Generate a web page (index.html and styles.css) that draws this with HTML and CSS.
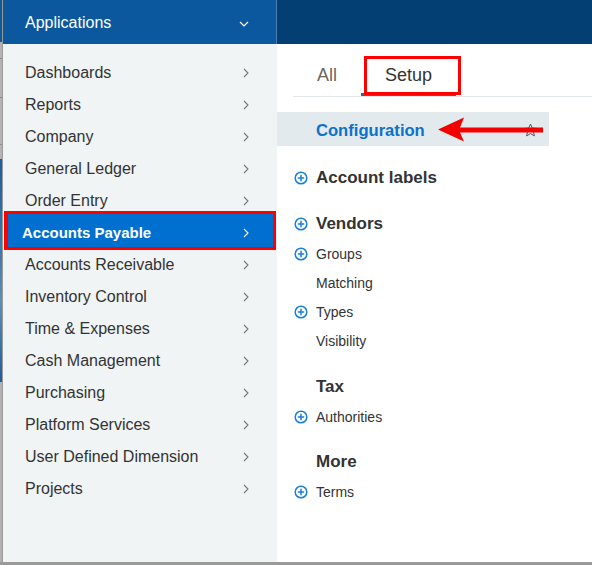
FILE: index.html
```html
<!DOCTYPE html>
<html>
<head>
<meta charset="utf-8">
<link rel="stylesheet" href="styles.css">
</head>
<body>
<div class="page">
  <div class="strip"></div>
  <aside class="apps">
    <div class="apps-head">
      <span>Applications</span>
      <svg class="chev-down" width="10" height="6" viewBox="0 0 10 6"><path d="M1 1l4 4 4-4" fill="none" stroke="#fff" stroke-width="1.2"/></svg>
    </div>
    <ul class="menu">
      <li class="item"><span>Dashboards</span><svg class="chev" width="6" height="10" viewBox="0 0 6 10"><path d="M1 1l4 4-4 4" fill="none" stroke="#777" stroke-width="1.1"/></svg></li>
      <li class="item"><span>Reports</span><svg class="chev" width="6" height="10" viewBox="0 0 6 10"><path d="M1 1l4 4-4 4" fill="none" stroke="#777" stroke-width="1.1"/></svg></li>
      <li class="item"><span>Company</span><svg class="chev" width="6" height="10" viewBox="0 0 6 10"><path d="M1 1l4 4-4 4" fill="none" stroke="#777" stroke-width="1.1"/></svg></li>
      <li class="item"><span>General Ledger</span><svg class="chev" width="6" height="10" viewBox="0 0 6 10"><path d="M1 1l4 4-4 4" fill="none" stroke="#777" stroke-width="1.1"/></svg></li>
      <li class="item"><span>Order Entry</span><svg class="chev" width="6" height="10" viewBox="0 0 6 10"><path d="M1 1l4 4-4 4" fill="none" stroke="#777" stroke-width="1.1"/></svg></li>
      <li class="item active"><span>Accounts Payable</span><svg class="chev" width="6" height="10" viewBox="0 0 6 10"><path d="M1 1l4 4-4 4" fill="none" stroke="#fff" stroke-width="1.1"/></svg></li>
      <li class="item"><span>Accounts Receivable</span><svg class="chev" width="6" height="10" viewBox="0 0 6 10"><path d="M1 1l4 4-4 4" fill="none" stroke="#777" stroke-width="1.1"/></svg></li>
      <li class="item"><span>Inventory Control</span><svg class="chev" width="6" height="10" viewBox="0 0 6 10"><path d="M1 1l4 4-4 4" fill="none" stroke="#777" stroke-width="1.1"/></svg></li>
      <li class="item"><span>Time &amp; Expenses</span><svg class="chev" width="6" height="10" viewBox="0 0 6 10"><path d="M1 1l4 4-4 4" fill="none" stroke="#777" stroke-width="1.1"/></svg></li>
      <li class="item"><span>Cash Management</span><svg class="chev" width="6" height="10" viewBox="0 0 6 10"><path d="M1 1l4 4-4 4" fill="none" stroke="#777" stroke-width="1.1"/></svg></li>
      <li class="item"><span>Purchasing</span><svg class="chev" width="6" height="10" viewBox="0 0 6 10"><path d="M1 1l4 4-4 4" fill="none" stroke="#777" stroke-width="1.1"/></svg></li>
      <li class="item"><span>Platform Services</span><svg class="chev" width="6" height="10" viewBox="0 0 6 10"><path d="M1 1l4 4-4 4" fill="none" stroke="#777" stroke-width="1.1"/></svg></li>
      <li class="item"><span>User Defined Dimension</span><svg class="chev" width="6" height="10" viewBox="0 0 6 10"><path d="M1 1l4 4-4 4" fill="none" stroke="#777" stroke-width="1.1"/></svg></li>
      <li class="item"><span>Projects</span><svg class="chev" width="6" height="10" viewBox="0 0 6 10"><path d="M1 1l4 4-4 4" fill="none" stroke="#777" stroke-width="1.1"/></svg></li>
    </ul>
  </aside>
  <main class="detail">
    <div class="detail-head"></div>
    <nav class="tabs">
      <div class="tab">All</div>
      <div class="tab current">Setup</div>
    </nav>
    <div class="config">
      <span>Configuration</span>
      <svg class="star" width="15" height="14" viewBox="0 0 15 14"><path d="M7.5 1l1.8 4.1 4.5.4-3.4 3 1 4.4-3.9-2.3-3.9 2.3 1-4.4-3.4-3 4.5-.4z" fill="none" stroke="#555" stroke-width="1"/></svg>
      <svg class="arrow" width="105" height="25" viewBox="0 0 105 25"><path d="M0 12.5L26 0.5L22 10.5H105V15.5H22L26 24.5Z" fill="#f20000"/></svg>
    </div>
    <section class="group first">
      <h3 class="row head"><svg class="plus" width="14" height="14" viewBox="0 0 14 14"><circle cx="7" cy="7" r="5.8" fill="none" stroke="#1a7fd6" stroke-width="1.5"/><path d="M7 3.8v6.4M3.8 7h6.4" stroke="#1a7fd6" stroke-width="1.5"/></svg>Account labels</h3>
    </section>
    <section class="group">
      <h3 class="row head"><svg class="plus" width="14" height="14" viewBox="0 0 14 14"><circle cx="7" cy="7" r="5.8" fill="none" stroke="#1a7fd6" stroke-width="1.5"/><path d="M7 3.8v6.4M3.8 7h6.4" stroke="#1a7fd6" stroke-width="1.5"/></svg>Vendors</h3>
      <div class="row sub"><svg class="plus" width="14" height="14" viewBox="0 0 14 14"><circle cx="7" cy="7" r="5.8" fill="none" stroke="#1a7fd6" stroke-width="1.5"/><path d="M7 3.8v6.4M3.8 7h6.4" stroke="#1a7fd6" stroke-width="1.5"/></svg>Groups</div>
      <div class="row sub">Matching</div>
      <div class="row sub"><svg class="plus" width="14" height="14" viewBox="0 0 14 14"><circle cx="7" cy="7" r="5.8" fill="none" stroke="#1a7fd6" stroke-width="1.5"/><path d="M7 3.8v6.4M3.8 7h6.4" stroke="#1a7fd6" stroke-width="1.5"/></svg>Types</div>
      <div class="row sub">Visibility</div>
    </section>
    <section class="group spaced">
      <h3 class="row head">Tax</h3>
      <div class="row sub"><svg class="plus" width="14" height="14" viewBox="0 0 14 14"><circle cx="7" cy="7" r="5.8" fill="none" stroke="#1a7fd6" stroke-width="1.5"/><path d="M7 3.8v6.4M3.8 7h6.4" stroke="#1a7fd6" stroke-width="1.5"/></svg>Authorities</div>
    </section>
    <section class="group">
      <h3 class="row head">More</h3>
      <div class="row sub"><svg class="plus" width="14" height="14" viewBox="0 0 14 14"><circle cx="7" cy="7" r="5.8" fill="none" stroke="#1a7fd6" stroke-width="1.5"/><path d="M7 3.8v6.4M3.8 7h6.4" stroke="#1a7fd6" stroke-width="1.5"/></svg>Terms</div>
    </section>
  </main>
</div>
<div class="bottom-edge"></div>
</body>
</html>
```

FILE: styles.css
```css
* { box-sizing: border-box; }
html, body { margin: 0; padding: 0; }
html { height: 100%; }
body {
  font-family: "Liberation Sans", Arial, sans-serif;
  background: #fff;
  height: 100vh;
  overflow: hidden;
  display: flex;
  flex-direction: column;
}
.page {
  display: grid;
  grid-template-columns: 3px 274px 1fr;
  flex: 1 1 auto;
  min-height: 0;
}
.bottom-edge {
  height: 3px;
  background: #9a9a9a;
  flex: none;
}
.strip {
  background: linear-gradient(to bottom,
    #0c5a9e 0, #0c5a9e 42px,
    #b4b4b4 42px, #b4b4b4 58px, #8d8d8d 58px, #8d8d8d 59px,
    #b4b4b4 59px, #b4b4b4 97px, #8d8d8d 97px, #8d8d8d 98px,
    #b4b4b4 98px, #b4b4b4 144px, #8d8d8d 144px, #8d8d8d 145px,
    #b4b4b4 145px, #b4b4b4 159px,
    #1d5e99 159px, #3f79a8 250px, #5f8fb2 300px, #1d5e99 382px,
    #b1b1b1 382px, #b1b1b1 100%);
  border-right: 1px solid #9a9a9a;
}
.apps {
  background: #f0f4f5;
  display: flex;
  flex-direction: column;
}
.apps-head {
  height: 44px;
  background: #0b589e;
  border-right: 1px solid #4a7fb0;
  color: #fff;
  font-size: 16px;
  display: flex;
  align-items: center;
  justify-content: space-between;
  padding: 2px 27px 0 22px;
}
.chev-down { margin-top: 1px; }
.menu {
  list-style: none;
  margin: 0;
  padding: 12px 0 0;
}
.item {
  height: 32px;
  display: flex;
  align-items: center;
  justify-content: space-between;
  padding: 1px 28px 0 22px;
  font-size: 16px;
  color: #333;
  position: relative;
}
.item span { position: relative; z-index: 2; }
.item .chev { position: relative; z-index: 2; }
.item.active {
  color: #fff;
  font-weight: bold;
  font-size: 15px;
  padding-left: 19px;
}
.item.active::before {
  content: "";
  position: absolute;
  left: 4px; right: 3px; top: -3px; bottom: 0;
  background: #0070d0;
  z-index: 1;
}
.item.active::after {
  content: "";
  position: absolute;
  left: 1px; right: 1px; top: -5px; bottom: -2px;
  border: 3px solid #f00;
  border-left-width: 4px;
  z-index: 1;
}
.detail {
  display: flex;
  flex-direction: column;
}
.detail-head {
  height: 44px;
  background: #043f73;
}
.tabs {
  display: flex;
  margin: 12px 0 0 16px;
  border-bottom: 1px solid #e3e7ea;
}
.tab {
  height: 40px;
  padding: 0 24px;
  font-size: 18px;
  color: #666;
  display: flex;
  align-items: center;
  border-bottom: 3px solid transparent;
  padding-top: 2px;
}
.tab.current {
  color: #333;
  border-bottom-color: #0a70cc;
  position: relative;
}
.tab.current::after {
  content: "";
  position: absolute;
  left: 3px; right: -5px; top: 0; bottom: -2px;
  border: 3px solid #f00;
}
.config {
  margin: 15px 43px 0 0;
  height: 34px;
  background: #e2eaed;
  display: flex;
  align-items: center;
  padding: 3px 0 0 39px;
  color: #0c72c8;
  font-size: 16.6px;
  font-weight: bold;
  position: relative;
}
.config .star {
  position: absolute;
  left: 246px;
  top: 11px;
}
.config .arrow {
  position: absolute;
  left: 161px;
  top: 5px;
}
.group {
  margin-top: 15px;
}
.group.first { margin-top: 16px; }
.group.spaced { margin-top: 16px; }
.row {
  margin: 0;
  display: flex;
  align-items: center;
  padding-left: 39px;
  position: relative;
  color: #333;
}
.row .plus {
  position: absolute;
  left: 17px;
  top: 50%;
  margin-top: -7px;
}
.head {
  height: 31px;
  font-size: 17px;
  font-weight: bold;
}
.sub {
  height: 29px;
  font-size: 14px;
}
```
